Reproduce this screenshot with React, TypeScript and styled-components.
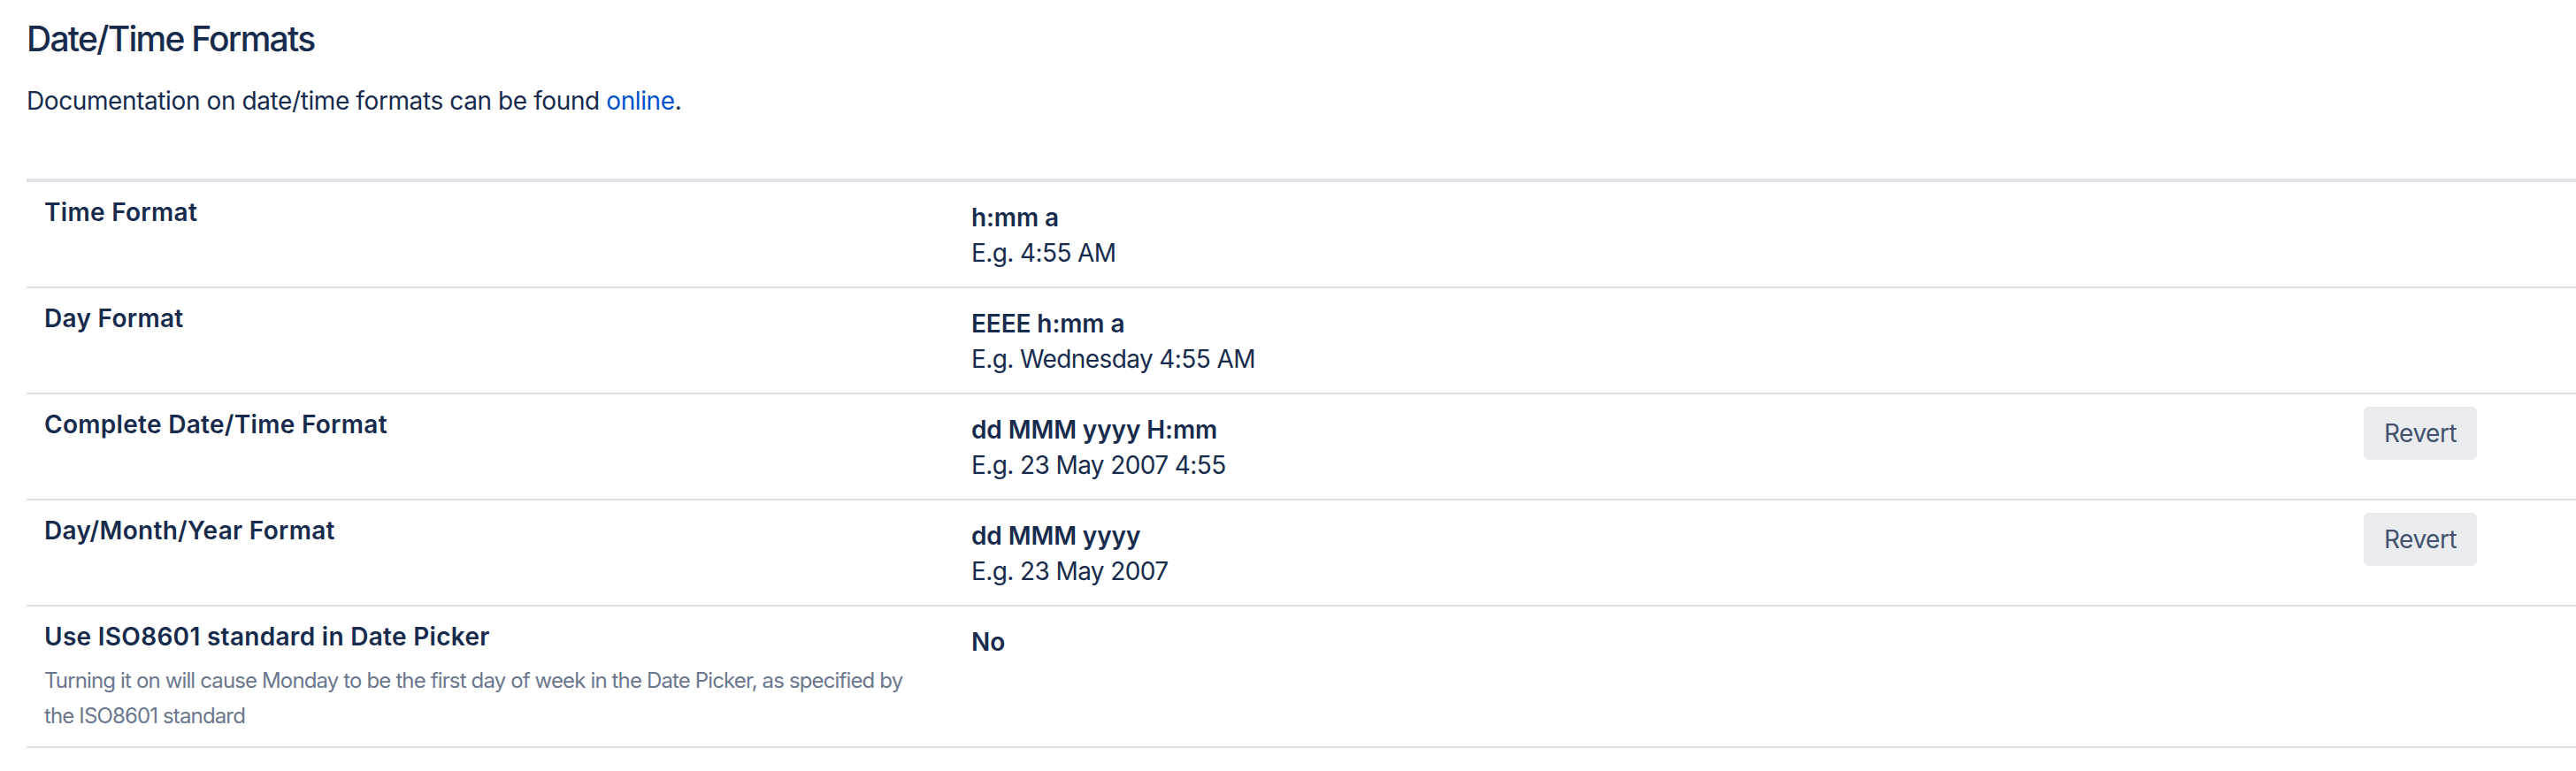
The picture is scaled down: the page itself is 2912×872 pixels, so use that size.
import React from "react";
import styled, { createGlobalStyle } from "styled-components";

const GlobalStyle = createGlobalStyle`
  html, body {
    margin: 0;
    padding: 0;
    background: #ffffff;
  }
  body {
    font-family: Inter, "Noto Sans", "Liberation Sans", sans-serif;
    color: #172b4d;
    -webkit-font-smoothing: antialiased;
  }
`;

const Page = styled.div`
  padding: 20px 0 0 30px;
  width: 2912px;
  box-sizing: border-box;
`;

const Heading = styled.h2`
  margin: 0;
  font-size: 39px;
  line-height: 48px;
  font-weight: 500;
  color: #172b4d;
  letter-spacing: -1.75px;
`;

const Intro = styled.p`
  margin: 26px 0 0;
  font-size: 28px;
  line-height: 40px;
  font-weight: 400;
  color: #172b4d;
  letter-spacing: -0.4px;
`;

const Link = styled.a`
  color: #0052cc;
  text-decoration: none;
`;

const Table = styled.div`
  margin-top: 68px;
  border-top: 4px solid #dfe1e6;
`;

const Row = styled.div`
  display: grid;
  grid-template-columns: 1048px 1fr 260px;
  border-bottom: 2px solid #dfe1e6;
`;

const LabelCell = styled.div`
  padding: 14px 20px;
`;

const Label = styled.div`
  font-size: 28px;
  line-height: 40px;
  font-weight: 600;
  color: #172b4d;
  letter-spacing: 0.3px;
`;

const Help = styled.div`
  margin-top: 10px;
  max-width: 990px;
  font-size: 24px;
  line-height: 40px;
  color: #6b778c;
  letter-spacing: -0.86px;
`;

const ValueCell = styled.div`
  padding: 20px 20px 18px;
`;

const Value = styled.div`
  font-size: 28px;
  line-height: 40px;
  font-weight: 600;
  color: #172b4d;
  letter-spacing: -0.1px;
`;

const Example = styled.div`
  font-size: 28px;
  line-height: 40px;
  font-weight: 400;
  color: #172b4d;
  letter-spacing: -0.6px;
`;

const ActionCell = styled.div`
  padding: 14px 20px;
`;

const Button = styled.button`
  height: 60px;
  padding: 0 23px;
  border: none;
  border-radius: 6px;
  background: #ebecf0;
  color: #42526e;
  font-family: inherit;
  font-size: 28px;
  line-height: 60px;
  font-weight: 400;
  letter-spacing: -0.5px;
  cursor: pointer;
`;

type Setting = {
  label: string;
  help?: string;
  value: string;
  example?: string;
  revert?: boolean;
};

const settings: Setting[] = [
  { label: "Time Format", value: "h:mm a", example: "E.g. 4:55 AM" },
  { label: "Day Format", value: "EEEE h:mm a", example: "E.g. Wednesday 4:55 AM" },
  {
    label: "Complete Date/Time Format",
    value: "dd MMM yyyy H:mm",
    example: "E.g. 23 May 2007 4:55",
    revert: true,
  },
  {
    label: "Day/Month/Year Format",
    value: "dd MMM yyyy",
    example: "E.g. 23 May 2007",
    revert: true,
  },
  {
    label: "Use ISO8601 standard in Date Picker",
    help: "Turning it on will cause Monday to be the first day of week in the Date Picker, as specified by the ISO8601 standard",
    value: "No",
  },
];

export default function App() {
  return (
    <>
      <GlobalStyle />
      <Page>
        <Heading>Date/Time Formats</Heading>
        <Intro>
          Documentation on date/time formats can be found <Link href="#">online</Link>.
        </Intro>
        <Table>
          {settings.map((s) => (
            <Row key={s.label}>
              <LabelCell>
                <Label>{s.label}</Label>
                {s.help && <Help>{s.help}</Help>}
              </LabelCell>
              <ValueCell>
                <Value>{s.value}</Value>
                {s.example && <Example>{s.example}</Example>}
              </ValueCell>
              <ActionCell>{s.revert && <Button>Revert</Button>}</ActionCell>
            </Row>
          ))}
        </Table>
      </Page>
    </>
  );
}
